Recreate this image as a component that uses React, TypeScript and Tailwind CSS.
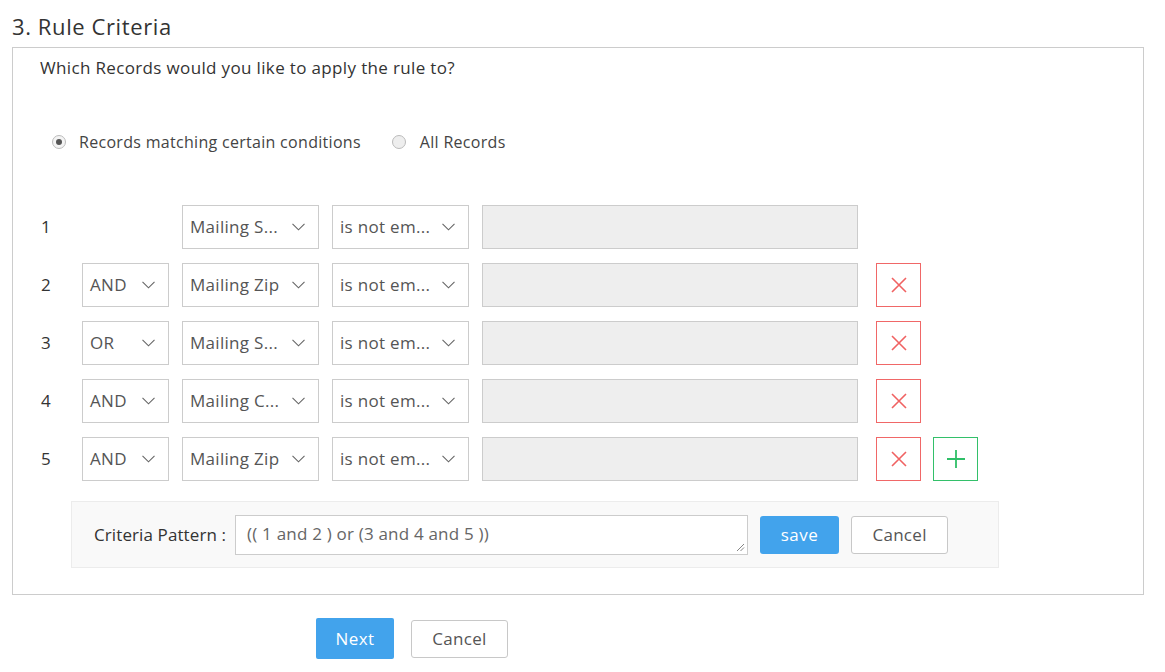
import React from 'react';

type Row = { num: number; op?: string; field: string; cond: string; add?: boolean };

const ROWS: Row[] = [
  { num: 1, field: 'Mailing S...', cond: 'is not em...' },
  { num: 2, op: 'AND', field: 'Mailing Zip', cond: 'is not em...' },
  { num: 3, op: 'OR', field: 'Mailing S...', cond: 'is not em...' },
  { num: 4, op: 'AND', field: 'Mailing C...', cond: 'is not em...' },
  { num: 5, op: 'AND', field: 'Mailing Zip', cond: 'is not em...', add: true },
];

const Chevron = () => (
  <svg width="13" height="8" viewBox="0 0 13 8" fill="none" className="shrink-0">
    <path d="M0.5 0.8 L6.5 6.8 L12.5 0.8" stroke="#666" strokeWidth="1.1" />
  </svg>
);

const Select: React.FC<{ label: string; w: string }> = ({ label, w }) => (
  <div className={`${w} h-[44px] border border-[#cccccc] bg-white flex items-center justify-between pl-[7px] pr-[13px] text-[17px] tracking-[0.3px] text-[#555]`}>
    <span className="whitespace-nowrap">{label}</span>
    <Chevron />
  </div>
);

const App: React.FC = () => {
  return (
    <div className="w-[1165px] h-[672px] bg-white text-[#333] font-['Open_Sans','Liberation_Sans',sans-serif] pl-3 pr-[21px] pt-[12px]">
      <h2 className="text-[22px] leading-[28px] tracking-[0.6px] text-[#333] mb-[7px]">3. Rule Criteria</h2>

      <div className="border border-[#cccccc] h-[548px] pl-[27px] pt-[9px]">
        <p className="text-[17px] leading-[22px] tracking-[0.35px]">Which Records would you like to apply the rule to?</p>

        {/* Record scope */}
        <div className="flex items-center mt-[51px] ml-[12px] text-[16px] tracking-[0.3px] text-[#444]">
          <label className="flex items-center">
            <span className="w-[14px] h-[14px] rounded-full border border-[#bbb] bg-[#f4f4f4] flex items-center justify-center">
              <span className="w-[6px] h-[6px] rounded-full bg-[#555]"></span>
            </span>
            <span className="ml-[13px]">Records matching certain conditions</span>
          </label>
          <label className="flex items-center ml-[31px]">
            <span className="w-[14px] h-[14px] rounded-full border border-[#bbb] bg-[#eee]"></span>
            <span className="ml-[14px]">All Records</span>
          </label>
        </div>

        {/* Conditions */}
        <div className="mt-[51px] flex flex-col gap-[14px]">
          {ROWS.map((row) => (
            <div key={row.num} className="flex items-center h-[44px]">
              <span className="w-[42px] text-[17px] text-[#333] pl-[1px]">{row.num}</span>
              <div className="w-[100px]">
                {row.op && <Select label={row.op} w="w-[87px]" />}
              </div>
              <Select label={row.field} w="w-[137px]" />
              <div className="ml-[13px]">
                <Select label={row.cond} w="w-[137px]" />
              </div>
              <div className="ml-[13px] w-[376px] h-[44px] border border-[#cccccc] bg-[#eeeeee]"></div>
              {row.num > 1 && (
                <button className="ml-[18px] w-[45px] h-[44px] border border-[#f06767] flex items-center justify-center">
                  <svg width="16" height="16" viewBox="0 0 16 16">
                    <path d="M1 1 L15 15 M15 1 L1 15" stroke="#f06262" strokeWidth="1.6" />
                  </svg>
                </button>
              )}
              {row.add && (
                <button className="ml-[12px] w-[45px] h-[44px] border border-[#33c06a] flex items-center justify-center">
                  <svg width="20" height="20" viewBox="0 0 20 20">
                    <path d="M10 1 V19 M1 10 H19" stroke="#2fbf68" strokeWidth="1.8" />
                  </svg>
                </button>
              )}
            </div>
          ))}
        </div>

        {/* Criteria pattern */}
        <div className="mt-[20px] ml-[31px] w-[928px] h-[67px] bg-[#f9f9f9] border border-[#ececec] flex items-center pl-[22px]">
          <span className="text-[17px] tracking-[0.1px] text-[#333]">Criteria Pattern :</span>
          <div className="relative ml-[9px] w-[513px] h-[40px] bg-white border border-[#cccccc] pl-[11px] pt-[5px] text-[17px] tracking-[0.2px] text-[#666]">
            (( 1 and 2 ) or (3 and 4 and 5 ))
            <svg className="absolute right-[2px] bottom-[2px]" width="9" height="9" viewBox="0 0 9 9">
              <path d="M8 1 L1 8 M8 4.5 L4.5 8" stroke="#777" strokeWidth="0.9" />
            </svg>
          </div>
          <button className="ml-[12px] w-[79px] h-[38px] rounded-[3px] bg-[#42a3ec] text-white text-[17px] tracking-[0.5px]">save</button>
          <button className="ml-[12px] w-[97px] h-[38px] rounded-[3px] border border-[#c8c8c8] bg-white text-[#555] text-[17px] tracking-[0.3px]">Cancel</button>
        </div>
      </div>

      {/* Footer actions */}
      <div className="flex items-center mt-[23px] ml-[304px]">
        <button className="w-[78px] h-[41px] rounded-[2px] bg-[#42a3ec] text-white text-[17px] tracking-[0.4px]">Next</button>
        <button className="ml-[17px] w-[97px] h-[38px] rounded-[3px] border border-[#c8c8c8] bg-white text-[#555] text-[17px] tracking-[0.3px]">Cancel</button>
      </div>
    </div>
  );
};

export default App;
